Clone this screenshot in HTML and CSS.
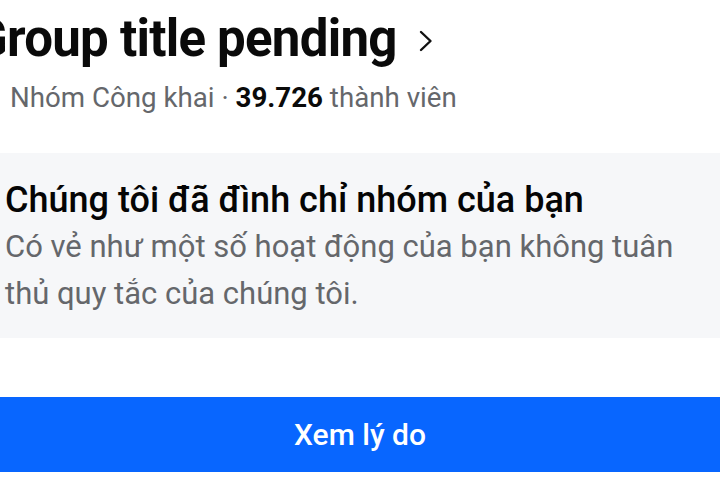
FILE: index.html
```html
<!DOCTYPE html>
<html lang="vi">
<head>
<meta charset="utf-8">
<link rel="stylesheet" href="styles.css">
</head>
<body>
<div class="page">
  <header class="header">
    <div class="title-row">
      <h1 class="title">Group title pending</h1>
      <svg class="chevron" width="16" height="24" viewBox="0 0 16 24"><path d="M3 3 L12.5 12 L3 21" fill="none" stroke="#111" stroke-width="2.4" stroke-linecap="round" stroke-linejoin="round"/></svg>
    </div>
    <p class="meta">Nhóm Công khai · <b class="count">39.726</b> thành viên</p>
  </header>
  <section class="notice">
    <h2 class="notice-title">Chúng tôi đã đình chỉ nhóm của bạn</h2>
    <p class="notice-text">Có vẻ như một số hoạt động của bạn không tuân thủ quy tắc của chúng tôi.</p>
  </section>
  <div class="actions">
    <button class="btn">Xem lý do</button>
  </div>
</div>
</body>
</html>
```
FILE: styles.css
```css
html, body {
  margin: 0;
  padding: 0;
  background: #ffffff;
}
body {
  font-family: Roboto, "Noto Sans", sans-serif;
  width: 720px;
  height: 480px;
  overflow: hidden;
}
.page {
  display: flex;
  flex-direction: column;
}
.header {
  padding: 9px 0 0 10px;
}
.title-row {
  display: flex;
  align-items: center;
  gap: 21px;
  margin-left: -37px;
}
.title {
  margin: 0;
  font-size: 51px;
  font-weight: 700;
  line-height: 60px;
  color: #0a0a0a;
  letter-spacing: -0.75px;
  white-space: nowrap;
}
.chevron {
  margin-top: 4px;
  flex: none;
}
.meta {
  margin: 12px 0 0 0;
  font-size: 27.7px;
  line-height: 34px;
  color: #65676b;
  white-space: nowrap;
}
.count {
  color: #0a0a0a;
  font-weight: 700;
}
.notice {
  margin-top: 38px;
  background: #f6f7f9;
  padding: 25px 6px 21px 5px;
}
.notice-title {
  margin: 0;
  font-size: 36px;
  font-weight: 500;
  line-height: 44px;
  color: #050505;
  white-space: nowrap;
}
.notice-text {
  margin: 1px 0 0 0;
  font-size: 31px;
  line-height: 47px;
  color: #65676b;
}
.actions {
  margin-top: 59px;
}
.btn {
  display: flex;
  align-items: center;
  justify-content: center;
  width: 100%;
  height: 75px;
  border: 0;
  margin: 0;
  padding: 0;
  background: #0866ff;
  color: #ffffff;
  font-family: Roboto, "Noto Sans", sans-serif;
  font-size: 30px;
  font-weight: 500;
}
```
